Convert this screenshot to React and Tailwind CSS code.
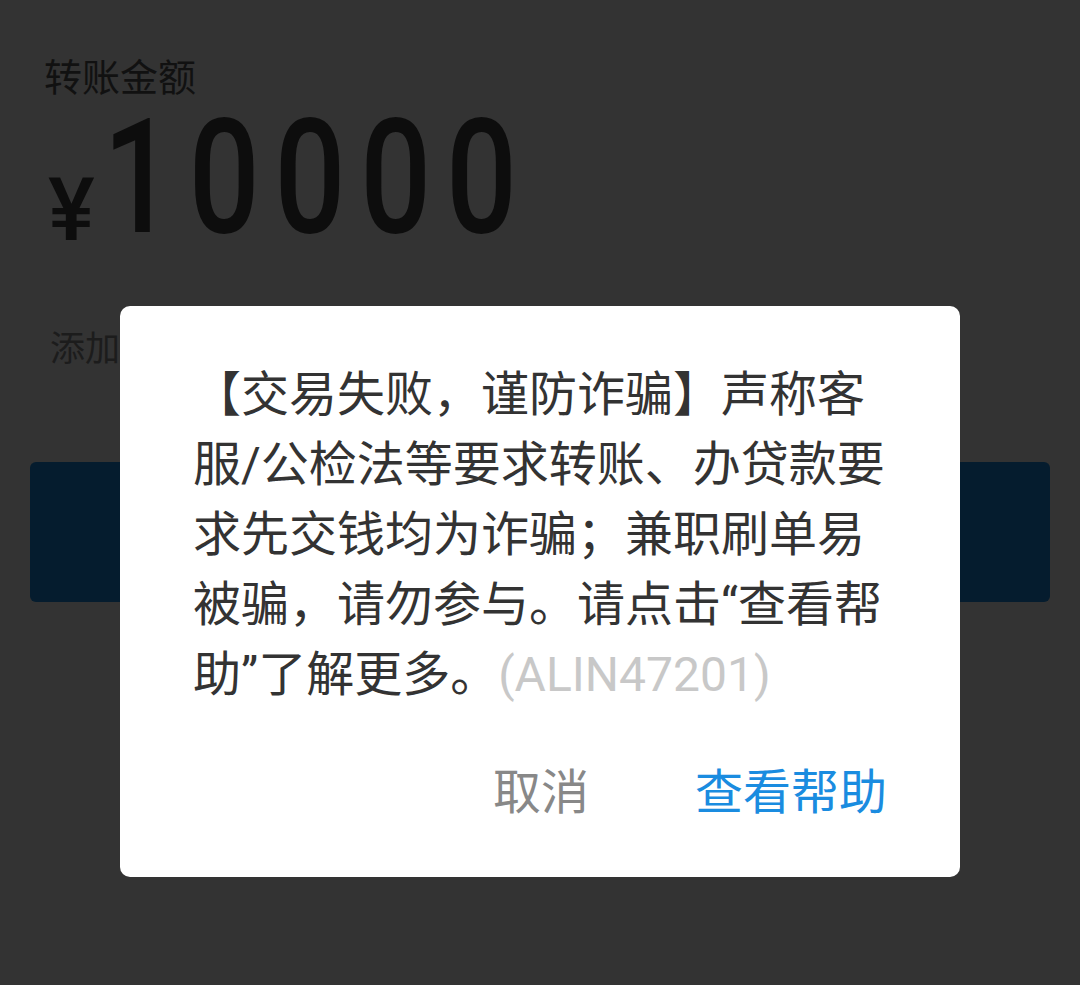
import React from "react";

const FONT = "font-['Roboto','Noto_Sans_CJK_SC',sans-serif]";

export default function App() {
  const lines = [
    "【交易失败，谨防诈骗】声称客",
    "服/公检法等要求转账、办贷款要",
    "求先交钱均为诈骗；兼职刷单易",
    "被骗，请勿参与。请点击“查看帮",
  ];
  return (
    <div className={`relative w-[1080px] h-[985px] overflow-hidden bg-[#333333] ${FONT}`}>
      {/* background page (dimmed) */}
      <div className="flex flex-col">
        <div className="pl-[44px] pt-[55px] text-[38px] leading-[46px] text-[#111111]">转账金额</div>
        <div className="flex items-start pl-[48px] h-[140px] text-[#0d0d0d]">
          <span className="mt-[65px] text-[88px] leading-[88px] font-medium">¥</span>
          <span className="mt-[7px] ml-[8px] text-[160px] leading-[140px] font-medium tracking-[19px] scale-x-[0.78] origin-left whitespace-nowrap">
            10000
          </span>
        </div>
        <div className="pl-[50px] mt-[89px] text-[35px] leading-[40px] text-[#1c1c1c]">添加转账说明</div>
        <div className="mx-[30px] mt-[92px] h-[140px] rounded-[6px] bg-[#051c2e]" />
      </div>

      {/* dialog */}
      <div className="absolute left-[120px] top-[306px] w-[840px] h-[571px] rounded-[10px] bg-white px-[73px] pt-[54px]">
        <div className="text-[48px] leading-[70px] text-[#333333]">
          {lines.map((l) => (
            <div key={l} className="whitespace-nowrap">{l}</div>
          ))}
          <div className="whitespace-nowrap">
            助”了解更多。<span className="text-[#c8c8c8]">(ALIN47201)</span>
          </div>
        </div>
        <div className="mt-[48px] flex justify-end items-center gap-[106px] text-[48px] leading-[70px]">
          <span className="text-[#888888]">取消</span>
          <span className="text-[#1a8ce0]">查看帮助</span>
        </div>
      </div>
    </div>
  );
}
